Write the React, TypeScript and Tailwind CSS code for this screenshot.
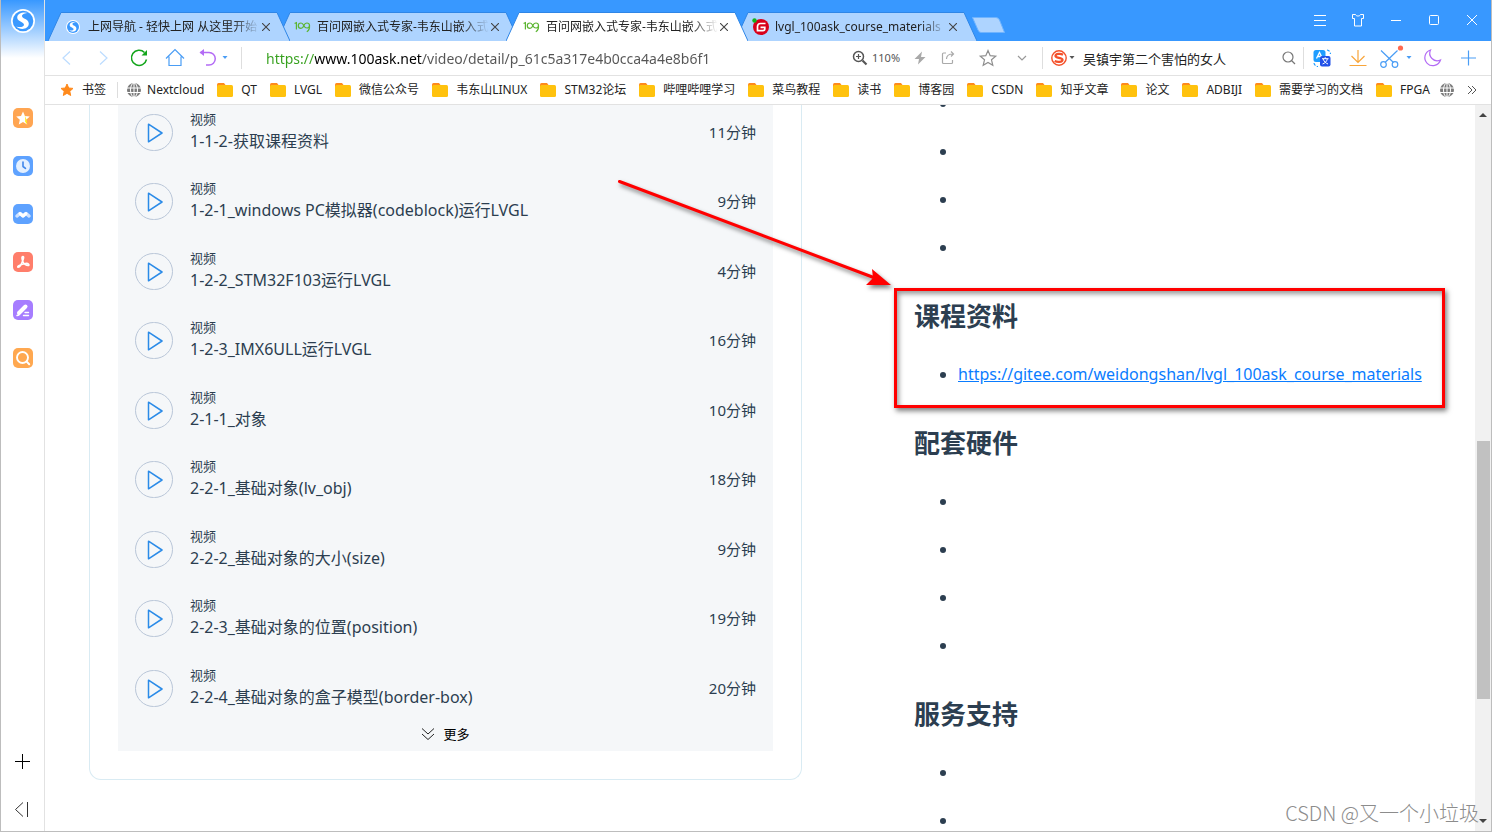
import type { ReactNode } from "react";

const tabs = [
  { title: "上网导航 - 轻快上网 从这里开始", icon: "sogou", layer: "z-30", active: false },
  { title: "百问网嵌入式专家-韦东山嵌入式", icon: "ask", layer: "z-20", active: false },
  { title: "百问网嵌入式专家-韦东山嵌入式", icon: "ask", layer: "z-40", active: true },
  { title: "lvgl_100ask_course_materials", icon: "gitee", layer: "z-10", active: false },
];

const bookmarks = [
  "QT",
  "LVGL",
  "微信公众号",
  "韦东山LINUX",
  "STM32论坛",
  "哔哩哔哩学习",
  "菜鸟教程",
  "读书",
  "博客园",
  "CSDN",
  "知乎文章",
  "论文",
  "ADBIJI",
  "需要学习的文档",
  "FPGA",
];

const videos = [
  { title: "1-1-2-获取课程资料", minutes: 11 },
  { title: "1-2-1_windows PC模拟器(codeblock)运行LVGL", minutes: 9 },
  { title: "1-2-2_STM32F103运行LVGL", minutes: 4 },
  { title: "1-2-3_IMX6ULL运行LVGL", minutes: 16 },
  { title: "2-1-1_对象", minutes: 10 },
  { title: "2-2-1_基础对象(lv_obj)", minutes: 18 },
  { title: "2-2-2_基础对象的大小(size)", minutes: 9 },
  { title: "2-2-3_基础对象的位置(position)", minutes: 19 },
  { title: "2-2-4_基础对象的盒子模型(border-box)", minutes: 20 },
];

const MATERIALS_URL = "https://gitee.com/weidongshan/lvgl_100ask_course_materials";

function SogouLogo({ className, s }: { className: string; s: string }) {
  return (
    <svg viewBox="0 0 24 24" className={className}>
      <circle cx="12" cy="12" r="12" fill="#fff" />
      <circle cx="12" cy="12" r="10.3" fill={s} />
      <path
        d="M17.2 4C13 2.6 6.2 3.6 6.2 8.6c0 4.2 6.8 4.2 6.8 7.2 0 2.4-4.5 2.8-7.8 1.8 3.6 4 12.6 3.2 12.6-3 0-4.8-6.8-4.6-6.8-7.6 0-2 3.2-3 6.2-3z"
        fill="#fff"
      />
    </svg>
  );
}

function TabIcon({ name }: { name: string }) {
  if (name === "sogou") return <SogouLogo className="size-3.5" s="#3a99ff" />;
  if (name === "ask")
    return (
      <svg viewBox="0 0 17 12" className="w-[17px] h-3" fill="none" stroke="#5cb531" strokeWidth="1.2" strokeLinecap="round">
        <path d="M1 2.2 2.4 1.6V8" />
        <path d="M9.8 4.800C9 3 8 2 7 2a2.600 2.600 0 0 0 0 5.400c1.200 0 2.200-1.100 2.800-2.600S11.600 2 13 2a2.500 2.500 0 0 1 0 5c-1.200 0-2.400-.8-3.200-2.200z" />
        <path d="M15.500 4.500c.2 3-.7 5-2.300 6" />
      </svg>
    );
  return (
    <svg viewBox="0 0 17 17" className="size-[17px]">
      <circle cx="9" cy="9" r="8" fill="#d8001b" />
      <path d="M13.500 5.500H8.500Q5.500 5.500 5.500 8.500V12.600h5.500Q12.800 12.600 12.800 10.800V9.300H8.500" fill="none" stroke="#fff" strokeWidth="1.7" />
      <circle cx="2.500" cy="2.500" r="2.2" fill="#0fb51c" />
    </svg>
  );
}

function Tab({ title, icon, layer, active }: (typeof tabs)[number]) {
  return (
    <div className={`relative w-[242px] h-[29px] -mr-[13px] flex items-center px-4 ${layer}`}>
      <svg viewBox="0 0 242 29" preserveAspectRatio="none" className="absolute inset-0 size-full">
        <path d="M0 29 13 .5H229L242 29z" fill={active ? "#fff" : "#aed4ff"} />
        <path d="M0 29 13 .5H229L242 29" fill="none" stroke="#2f86e6" strokeWidth="1" />
      </svg>
      <span className="relative w-[18px] flex justify-center">
        <TabIcon name={icon} />
      </span>
      <span className="relative ml-1.5 w-[172px] whitespace-nowrap text-xs text-[#222] [mask-image:linear-gradient(90deg,#000_145px,transparent_172px)]">
        {title}
      </span>
      <button aria-label="关闭标签" className="relative size-3 flex items-center justify-center">
        <svg viewBox="0 0 8 8" className="size-2" stroke="#444" strokeWidth="1.1">
          <path d="M0 0 8 8M8 0 0 8" />
        </svg>
      </button>
    </div>
  );
}

function WindowButton({ label, children }: { label: string; children: ReactNode }) {
  return (
    <button aria-label={label} className="w-[38px] h-10 flex items-center justify-center">
      <svg viewBox="0 0 14 14" className="size-3.5" fill="none" stroke="#fff" strokeWidth="1">
        {children}
      </svg>
    </button>
  );
}

function TabStrip() {
  return (
    <div className="flex h-[41px] bg-[#3898ff]">
      <div className="flex items-end pl-[3px]">
        {tabs.map((tab, i) => (
          <Tab key={i} {...tab} />
        ))}
        <button aria-label="新标签" className="ml-2 mb-2 h-4">
          <svg viewBox="0 0 33 16" className="w-[33px] h-4">
            <path d="M.5.5H24q2.500 0 3.500 2.500L32.500 15.500H9Q7 15.500 6 13z" fill="#aed4ff" stroke="#6fb4ff" />
          </svg>
        </button>
      </div>
      <div className="ml-auto flex">
        <WindowButton label="菜单">
          <path d="M1 2.500h12M1 7.500h12M1 12.500h12" />
        </WindowButton>
        <WindowButton label="皮肤">
          <path d="M1.500 1.500h3c.5 2 4.500 2 5 0h3v4h-2v7.500h-7V5.500h-2z" />
        </WindowButton>
        <WindowButton label="最小化">
          <path d="M2 7.500h10" />
        </WindowButton>
        <WindowButton label="最大化">
          <rect x="2.500" y="2.500" width="9" height="9" rx="1" />
        </WindowButton>
        <WindowButton label="关闭">
          <path d="m2 2 10 10M12 2 2 12" />
        </WindowButton>
      </div>
    </div>
  );
}

function ToolButton({ label, className, children }: { label: string; className: string; children: ReactNode }) {
  return (
    <button aria-label={label} className={`shrink-0 h-8 flex items-center justify-center ${className}`}>
      <svg viewBox="0 0 20 20" className="size-5 shrink-0 overflow-visible" fill="none" stroke="currentColor" strokeWidth="1.2">
        {children}
      </svg>
    </button>
  );
}

function Caret({ label, className }: { label: string; className: string }) {
  return (
    <button aria-label={label} className={`shrink-0 h-8 flex items-center justify-center ${className}`}>
      <svg viewBox="0 0 6 4" className="w-1.5 h-1">
        <path d="M.5 0h5L3 3z" fill="currentColor" />
      </svg>
    </button>
  );
}

function Divider({ className }: { className: string }) {
  return <span className={`shrink-0 w-px h-[22px] bg-[#dedede] ${className}`} />;
}

function AddressBar() {
  return (
    <div className="flex items-center h-[35px] pl-1 pr-[5px] border-b border-[#e2e2e2] bg-white">
      <ToolButton label="后退" className="w-9 text-[#bcdcff]">
        <path d="M13 3.500 6 10l7 6.500" />
      </ToolButton>
      <ToolButton label="前进" className="w-9 text-[#bcdcff]">
        <path d="M7 3.500 14 10l-7 6.500" />
      </ToolButton>
      <ToolButton label="刷新" className="w-9 text-[#14a51c]">
        <path d="M17.500 11.500A7.600 7.600 0 1 1 15.500 4.500" strokeWidth="1.5" />
        <path d="M18 2v5.500h-5.500z" fill="currentColor" stroke="none" />
      </ToolButton>
      <ToolButton label="主页" className="w-9 text-[#4a9df5]">
        <path d="M1 10.500 10 1.500l9 9M4 8.500v9h12v-9" />
      </ToolButton>
      <ToolButton label="恢复" className="w-7 text-[#b36bf5]">
        <path d="M3.500 4.500H12a6.200 6.200 0 0 1 0 12.500H9" strokeWidth="1.5" />
        <path d="M7 1v7L2.500 4.500z" fill="currentColor" stroke="none" />
      </ToolButton>
      <Caret label="更多恢复" className="w-2 text-[#4a9df5]" />
      <Divider className="ml-3" />
      <input
        aria-label="网址"
        defaultValue="https://www.100ask.net/video/detail/p_61c5a317e4b0cca4a4e8b6f1"
        className="ml-6 flex-1 min-w-0 h-8 text-sm outline-none text-transparent bg-clip-text bg-[linear-gradient(90deg,#35a01c_49px,#000_49px,#000_156px,#555_156px)]"
      />
      <ToolButton label="缩放" className="w-4 text-[#555]">
        <circle cx="8.500" cy="8.500" r="5" strokeWidth="1.5" />
        <path d="M6 8.500h5M8.500 6v5" />
        <path d="m12.500 12.500 4 4" strokeWidth="2.2" />
      </ToolButton>
      <span className="ml-1 w-7 text-[11px] text-[#555]">110%</span>
      <ToolButton label="加速" className="ml-1.5 w-7 text-[#a9a9a9]">
        <path d="M12 3.500 4.500 11H9l-1 5.500L15.500 9H11z" fill="currentColor" stroke="none" />
      </ToolButton>
      <ToolButton label="分享" className="w-7 text-[#aaa]">
        <path d="M8 5H5.500q-1 0-1 1v8.500q0 1 1 1h8q1 0 1-1V12M8.500 11c0-3 2-5 6.500-5M13 3.500 15.500 6 13 8.500" />
      </ToolButton>
      <ToolButton label="收藏" className="ml-2.5 w-8 text-[#8e8e8e]">
        <path d="m10 2.500 2.200 5.200 5.500.5-4.200 3.600 1.300 5.500L10 14.400l-4.800 2.900 1.300-5.500-4.200-3.600 5.500-.5z" />
      </ToolButton>
      <ToolButton label="展开" className="w-9 text-[#999]">
        <path d="m6 8 4 4 4-4" />
      </ToolButton>
      <Divider className="ml-0.5" />
      <ToolButton label="搜狗搜索" className="ml-2 w-4 text-[#f4502a]">
        <circle cx="10" cy="10" r="7.2" strokeWidth="1.4" />
        <path
          d="M14 6.700C12 5.500 6.500 5.500 6.500 8c0 2.300 7 1.300 7 3.800 0 2.700-5.500 2.500-7.800 1.200"
          strokeWidth="2.3"
        />
      </ToolButton>
      <Caret label="选择搜索引擎" className="w-2.5 text-[#555]" />
      <input
        aria-label="搜索"
        defaultValue="吴镇宇第二个害怕的女人"
        className="ml-1.5 w-[198px] h-8 text-[13px] text-[#222] outline-none"
      />
      <ToolButton label="搜索" className="w-4 text-[#777]">
        <circle cx="9" cy="9" r="5" />
        <path d="m12.500 12.500 3.500 3.500" />
      </ToolButton>
      <Divider className="ml-1.5" />
      <ToolButton label="翻译" className="w-9 text-[#1f9dff]">
        <rect x="1.500" y="2" width="12" height="12" rx="2.500" fill="#1f9dff" stroke="none" />
        <path d="m4.500 10.500 3-6 2 4M5.500 8.500h4" stroke="#fff" strokeWidth="1.3" />
        <rect x="8" y="8" width="10.500" height="10.500" rx="2" fill="#2252e8" stroke="none" />
        <path
          d="M10 10.700h6.500M13.200 9.200v1.500M15.300 11c-.6 2.600-2.400 4.200-4.800 5M11.200 11c.8 2.600 2.600 4.200 4.800 5"
          stroke="#fff"
          strokeWidth="1"
        />
        <path d="M15 2q3 .5 3.500 4M2 15q.5 3 4 3.500" strokeDasharray="3 1.5" />
      </ToolButton>
      <ToolButton label="下载" className="w-9 text-[#f8a53a]">
        <path d="M10 2v12M3.500 8l6.500 6.500L16.500 8M1.500 17.500h17" />
      </ToolButton>
      <ToolButton label="截图" className="w-7 text-[#4a9df5]">
        <path d="m1 2.500 12.500 12M17.500 2.500 5 14.500" />
        <circle cx="3.500" cy="16.500" r="2.800" />
        <circle cx="15" cy="16.500" r="2.800" />
        <circle cx="20.500" cy="0" r="2.600" fill="#ff6a50" stroke="none" />
      </ToolButton>
      <Caret label="更多截图" className="w-2.5 text-[#4a9df5]" />
      <ToolButton label="夜间模式" className="w-9 text-[#b36bf5]">
        <path d="M8.500 2A8 8 0 1 0 18.500 12 7.500 7.500 0 0 1 8.500 2z" />
      </ToolButton>
      <ToolButton label="添加" className="w-9 text-[#4a9df5]">
        <path d="M10.500 2.500v15M3 10h15" />
      </ToolButton>
    </div>
  );
}

function Globe() {
  return (
    <svg viewBox="0 0 14 14" className="size-3.5 shrink-0">
      <circle cx="7" cy="7" r="7" fill="#7b7b7b" />
      <path d="M7 0v14M0 5h14M0 9.500h14" stroke="#fff" strokeWidth="1" />
      <ellipse cx="7" cy="7" rx="3.500" ry="7" fill="none" stroke="#fff" strokeWidth="1" />
    </svg>
  );
}

function BookmarkBar() {
  return (
    <div className="flex items-center h-[29px] pl-[15px] pr-3.5 border-b border-[#e2e2e2] bg-white text-xs text-[#222] whitespace-nowrap">
      <a href="#" className="flex items-center gap-2">
        <svg viewBox="0 0 14 14" className="size-3.5" fill="#ff8a1c" stroke="#ff8a1c" strokeLinejoin="round">
          <path d="m7 1 1.700 4 4.300.4-3.200 2.900.9 4.200L7 10.300l-3.700 2.200.9-4.200L1 5.400 5.300 5z" />
        </svg>
        书签
      </a>
      <span className="ml-[11px] w-px h-4 bg-[#ddd]" />
      <a href="#" className="ml-[9px] flex items-center gap-1.5">
        <Globe />
        Nextcloud
      </a>
      {bookmarks.map((name) => (
        <a key={name} href="#" className="ml-[13px] flex items-center gap-2">
          <svg viewBox="0 0 16 14" className="w-4 h-3.5 shrink-0">
            <path d="M0 5V1.500Q0 0 1.500 0H7l1.500 2v3z" fill="#ff8a1c" />
            <rect y="2" width="16" height="12" rx="1.5" fill="#ffc20e" />
          </svg>
          {name}
        </a>
      ))}
      <a href="#" aria-label="书签" className="ml-2.5">
        <Globe />
      </a>
      <button aria-label="更多书签" className="ml-auto">
        <svg viewBox="0 0 10 10" className="size-2.5" fill="none" stroke="#555">
          <path d="m1 1 4 4-4 4M5 1l4 4-4 4" />
        </svg>
      </button>
    </div>
  );
}

function SideIcon({ label, color, children }: { label: string; color: string; children: ReactNode }) {
  return (
    <button aria-label={label} className={`size-5 rounded-[5px] ${color}`}>
      <svg viewBox="0 0 20 20" className="size-5" fill="none" stroke="#fff" strokeLinecap="round" strokeLinejoin="round">
        {children}
      </svg>
    </button>
  );
}

function Sidebar() {
  return (
    <aside className="w-11 shrink-0 flex flex-col items-center border-r border-[#e2e2e2] bg-white bg-[linear-gradient(#3898ff_0,#fff_58px)]">
      <SogouLogo className="mt-[9px] size-6" s="#3a99ff" />
      <div className="mt-[75px] flex flex-col gap-7">
        <SideIcon label="收藏" color="bg-[#ffa552]">
          <path d="m10 3.500 2 4.500 4.800.5-3.600 3.200 1 4.700L10 14l-4.200 2.400 1-4.700-3.600-3.200L8 8z" fill="#fff" stroke="none" />
          <path d="m10 3.500 2 4.500 1.500 3.500.7 4.900-2-2.600Q13 9 10 3.500z" fill="#ffe600" stroke="none" />
        </SideIcon>
        <SideIcon label="历史" color="bg-[#5ea2ff]">
          <circle cx="10" cy="10" r="7" fill="#e4f0ff" stroke="none" />
          <path d="M10 6v4.500l2.500 1.800" stroke="#3f86ea" strokeWidth="1.6" />
        </SideIcon>
        <SideIcon label="文档" color="bg-[#5ea2ff]">
          <path d="m4 12 3-2.500 3 2.500 3-2.500 3 2.500" stroke="#cfe2ff" strokeWidth="3.5" />
          <path d="m7 9.500 3 2.500 3-2.500" strokeWidth="3" />
        </SideIcon>
        <SideIcon label="PDF" color="bg-[#ff7e6b]">
          <path
            d="M10 4.500c-2 0-.5 4 0 5.500s3 3.500 5 3.500.5-2.500-2.500-2-5 1-7 2.500.5 2 2-.5S11.800 4.500 10 4.500z"
            strokeWidth="1.6"
          />
        </SideIcon>
        <SideIcon label="笔记" color="bg-[#a67dff]">
          <path d="m6 13 6.500-6.500" strokeWidth="4" />
          <path d="M4 15.500 6 15M12 12.500h3.500M10.500 15.500h5" strokeWidth="1.4" />
        </SideIcon>
        <SideIcon label="搜索" color="bg-[#ffa850]">
          <circle cx="9.500" cy="9.500" r="5.500" strokeWidth="1.9" />
          <path d="m13.800 13.800 2.400 2.400" strokeWidth="2" />
        </SideIcon>
      </div>
      <div className="mt-auto mb-3.5 flex flex-col items-center gap-[33px]">
        <button aria-label="添加">
          <svg viewBox="0 0 15 15" className="size-[15px]" stroke="#000" strokeWidth="1">
            <path d="M7.500 0v15M0 7.500h15" />
          </svg>
        </button>
        <button aria-label="收起">
          <svg viewBox="0 0 15 15" className="size-[15px]" fill="none" stroke="#333" strokeWidth="1">
            <path d="M8 .5.500 7.500l7.500 7M12.500 0v15" />
          </svg>
        </button>
      </div>
    </aside>
  );
}

function VideoList() {
  return (
    <div className="w-[713px] h-[675px] shrink-0 ml-11 px-7 pb-7 border border-t-0 border-[#d9ebf3] rounded-b-xl">
      <div className="h-full bg-[#f5f7f9] text-[#2c3e50]">
        <ul>
          {videos.map((video) => (
            <li key={video.title} className="flex items-start odd:h-[69px] even:h-[70px] px-[17px] pt-1">
              <button
                aria-label={`播放 ${video.title}`}
                className="mt-[5px] w-[38px] h-[37px] shrink-0 rounded-full border border-[#b9c6d8] flex items-center justify-center"
              >
                <svg viewBox="0 0 16 20" className="ml-0.5 w-4 h-5" fill="none" stroke="#2b8be8" strokeWidth="1.5" strokeLinejoin="round">
                  <path d="M1.500 1.200 15 10 1.500 18.800z" />
                </svg>
              </button>
              <div className="ml-[17px]">
                <p className="text-[13px] leading-5">视频</p>
                <p className="text-base leading-6">{video.title}</p>
              </div>
              <span className="ml-auto text-[15px] leading-[46px]">{video.minutes}分钟</span>
            </li>
          ))}
        </ul>
        <button className="mx-auto -mt-1.5 flex items-center gap-2 text-[13px] leading-5 text-black">
          <svg viewBox="0 0 14 14" className="size-3.5" fill="none" stroke="#222">
            <path d="m1 1.500 6 5.500 6-5.500M1 7l6 5.500L13 7" />
          </svg>
          更多
        </button>
      </div>
    </div>
  );
}

function BulletList({ count, children }: { count: number; children?: ReactNode }) {
  return (
    <ul className="pl-[44px] list-disc text-base leading-[48px]">
      {Array.from({ length: count }, (_, i) => (
        <li key={i} className="h-12">
          {children}
        </li>
      ))}
    </ul>
  );
}

function Heading({ children }: { children: ReactNode }) {
  return <h2 className="pt-[25px] pb-3.5 text-[26px] leading-10 font-bold">{children}</h2>;
}

function CourseNotes() {
  return (
    <article className="relative flex-1 ml-[112px] -mt-[26px] text-[#2c3e50]">
      <BulletList count={4} />
      <Heading>课程资料</Heading>
      <BulletList count={1}>
        <a href={MATERIALS_URL} className="text-[#0a7cff] underline">
          {MATERIALS_URL}
        </a>
      </BulletList>
      <Heading>配套硬件</Heading>
      <BulletList count={4} />
      <Heading>服务支持</Heading>
      <BulletList count={2} />
      {/* red frame and arrow drawn over the page */}
      <div className="absolute -left-5 top-[209px] w-[551px] h-[120px] border-3 border-[#ff0000] shadow-[2px_3px_5px_rgba(0,0,0,0.5),inset_2px_3px_5px_rgba(0,0,0,0.4)]" />
      <svg viewBox="0 0 280 120" className="absolute -left-[299px] top-[98px] w-[280px] h-[120px] drop-shadow-[2px_3px_2px_rgba(0,0,0,0.5)]">
        <path d="M4.500 4.500 260 101" stroke="#f00" strokeWidth="3" strokeLinecap="round" />
        <path d="M276 108 251 108 258 101 257 92z" fill="#f00" />
      </svg>
    </article>
  );
}

function Scrollbar() {
  return (
    <div className="w-4 shrink-0 flex flex-col items-center bg-[#f1f1f1]">
      <svg viewBox="0 0 8 4" className="mt-2 w-2 h-1">
        <path d="M0 4 4 0l4 4z" fill="#444" />
      </svg>
      <div className="mt-[324px] w-[13px] h-[258px] bg-[#c1c1c1]" />
      <svg viewBox="0 0 8 4" className="mt-auto mb-2 w-2 h-1">
        <path d="M0 0 4 4l4-4z" fill="#444" />
      </svg>
    </div>
  );
}

export default function App() {
  return (
    <div className="relative h-screen mr-px flex overflow-hidden border-x border-b border-[#bdbdbd] bg-white font-['Noto_Sans','Noto_Sans_CJK_SC',sans-serif]">
      <Sidebar />
      <div className="flex-1 min-w-0 flex flex-col">
        <TabStrip />
        <AddressBar />
        <BookmarkBar />
        <main className="flex-1 min-h-0 flex">
          <div className="flex-1 min-w-0 flex items-start h-full overflow-hidden">
            <VideoList />
            <CourseNotes />
          </div>
          <Scrollbar />
        </main>
      </div>
      <p className="absolute right-3 bottom-1 text-xl leading-7 text-[#8c8c8c] font-['Noto_Sans_CJK_SC',sans-serif] font-light">
        CSDN @又一个小垃圾
      </p>
    </div>
  );
}
